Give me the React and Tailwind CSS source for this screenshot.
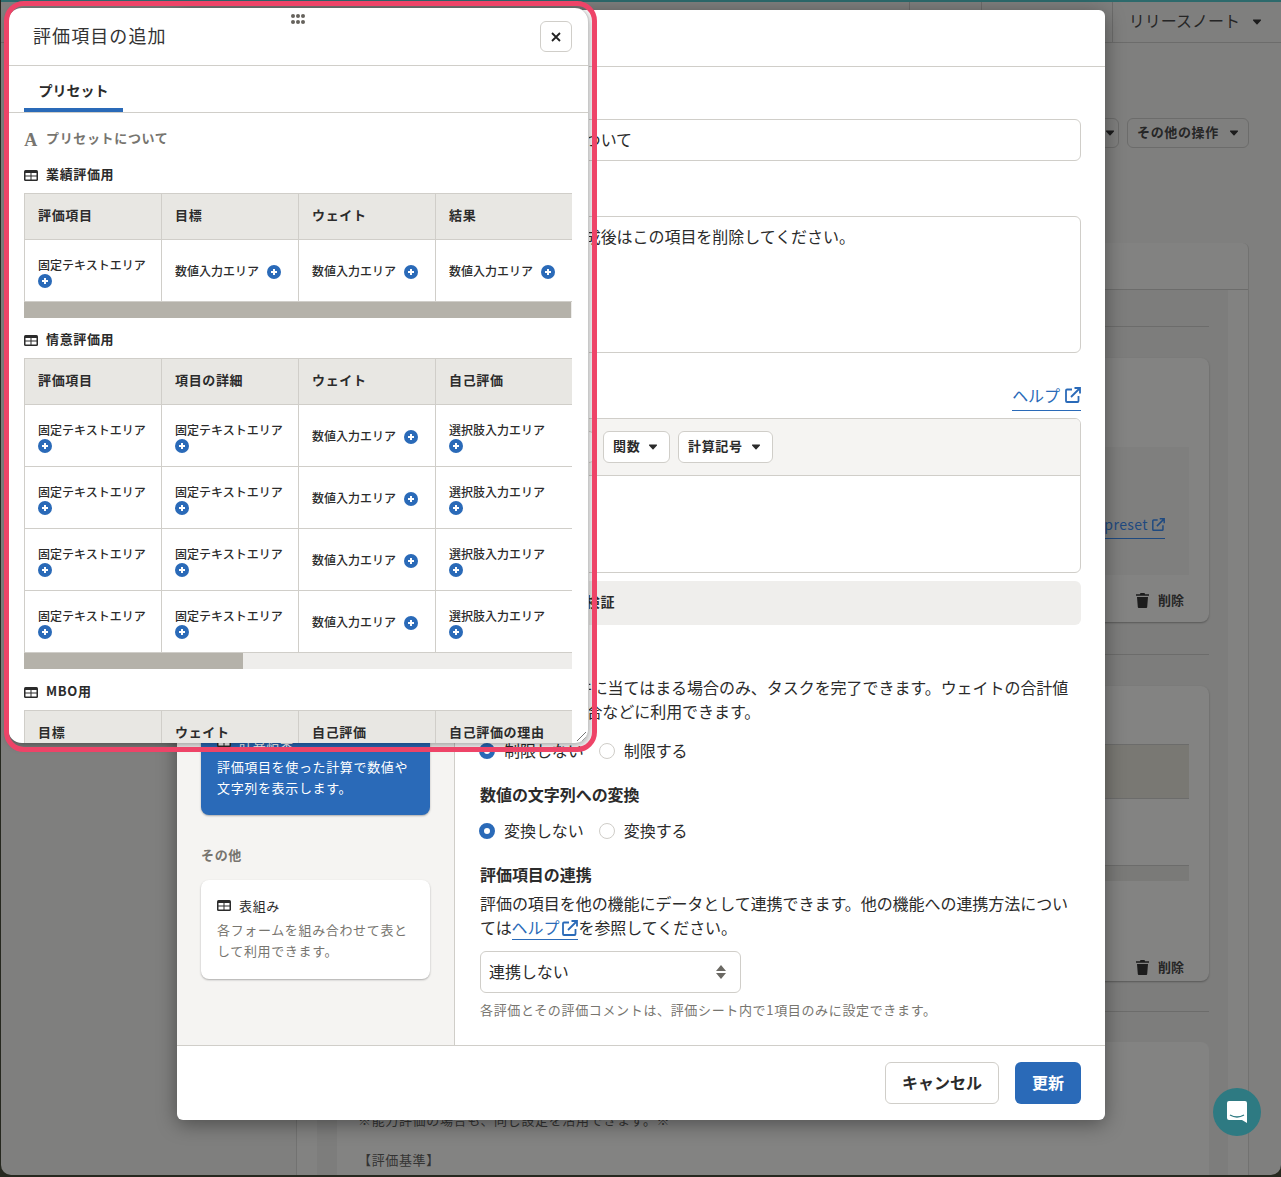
const sections = [
  {
    name: '業績評価用',
    head: ['評価項目', '目標', 'ウェイト', '結果'],
    rows: [['固定テキストエリア', '数値入力エリア', '数値入力エリア', '数値入力エリア']],
    thumb: 'w-[547px] bg-[#b5b2aa]',
  },
  {
    name: '情意評価用',
    head: ['評価項目', '項目の詳細', 'ウェイト', '自己評価'],
    rows: [
      ['固定テキストエリア', '固定テキストエリア', '数値入力エリア', '選択肢入力エリア'],
      ['固定テキストエリア', '固定テキストエリア', '数値入力エリア', '選択肢入力エリア'],
      ['固定テキストエリア', '固定テキストエリア', '数値入力エリア', '選択肢入力エリア'],
      ['固定テキストエリア', '固定テキストエリア', '数値入力エリア', '選択肢入力エリア'],
    ],
    thumb: 'w-[219px] bg-[#b5b2aa]',
  },
  {
    name: 'MBO用',
    head: ['目標', 'ウェイト', '自己評価', '自己評価の理由'],
    rows: [],
  },
];

const TableIcon = () => (
  <svg width="14" height="11" viewBox="0 0 14 11" className="shrink-0">
    <rect x="0" y="0" width="14" height="11" rx="1.5" fill="#2b2b2b" />
    <rect x="1.5" y="3" width="5" height="2.5" fill="#fff" />
    <rect x="7.5" y="3" width="5" height="2.5" fill="#fff" />
    <rect x="1.5" y="6.5" width="5" height="3" fill="#fff" />
    <rect x="7.5" y="6.5" width="5" height="3" fill="#fff" />
  </svg>
);

const PlusIcon = ({ className = '' }) => (
  <svg width="14" height="14" viewBox="0 0 14 14" className={`inline-block align-[-3px] ${className}`}>
    <circle cx="7" cy="7" r="7" fill="#2a6ab8" />
    <path d="M7 4v6M4 7h6" stroke="#fff" strokeWidth="2" />
  </svg>
);

const Caret = ({ className = 'fill-[#2b2b2b]' }) => (
  <svg width="10" height="6" viewBox="0 0 9 6" className={className}>
    <path d="M1 .5h7a.6.6 0 0 1 .45 1L5 5.300a.7.7 0 0 1-1 0L.55 1.500A.6.6 0 0 1 1 .5z" />
  </svg>
);

const ExternalIcon = ({ className = 'stroke-[#2a6ab8]', size = 16 }) => (
  <svg width={size} height={size} viewBox="0 0 16 16" fill="none" strokeWidth="1.8" className={`inline-block ${className}`}>
    <path d="M7 2.500H2a1 1 0 0 0-1 1V14a1 1 0 0 0 1 1h10.500a1 1 0 0 0 1-1V9" />
    <path d="M6 10l8-8M9.500 1h5.500v5.500" />
  </svg>
);

const TrashIcon = () => (
  <svg width="13" height="15" viewBox="0 0 13 15" className="fill-[#1c1c1c]">
    <path d="M4.500 0h4l.6 1.200H13v1.600H0V1.200h3.900zM1 4h11l-.8 10a1 1 0 0 1-1 1H2.800a1 1 0 0 1-1-1z" />
  </svg>
);

const Radio = ({ checked, label }) => (
  <label className="flex items-center gap-[9px]">
    {checked ? (
      <span className="w-4 h-4 rounded-full border-[5px] border-[#2a6ab8] bg-white" />
    ) : (
      <span className="w-4 h-4 rounded-full border border-[#cfcdc8] bg-white" />
    )}
    <span className="-translate-y-px">{label}</span>
  </label>
);

const ToolButton = ({ label, className }) => (
  <button className={`h-8 pl-[9px] pr-[11px] flex items-center justify-between bg-white border border-[#d0cec9] rounded-md text-[13px] font-bold tracking-[.05em] text-[#2b2b2b] ${className}`}>
    <span className="-translate-y-px">{label}</span>
    <Caret />
  </button>
);

const PresetTable = ({ section }) => (
  <>
    <div className="flex items-center gap-2 h-5 text-[13px] font-bold tracking-[.05em] text-[#2b2b2b]">
      <TableIcon />
      <span className="-translate-y-px">{section.name}</span>
    </div>
    <div className="mt-2 w-[548px] overflow-hidden border-t border-l border-[#d0cec9]">
      <div className="grid grid-cols-[repeat(4,137px)] w-[548px]">
        {section.head.map((h) => (
          <div key={h} className="h-[46px] flex items-center px-[13px] pb-1 bg-[#e8e7e3] border-r border-b border-[#d0cec9] text-[13px] font-bold tracking-[.05em] text-[#2b2b2b]">
            {h}
          </div>
        ))}
        {section.rows.map((row, i) =>
          row.map((c, j) => (
            <div key={`${i}-${j}`} className={`h-[62px] flex items-center pl-[13px] pr-[12px] border-r border-b border-[#d0cec9] text-[12px] leading-4 font-medium text-[#2b2b2b] ${c.length > 7 ? 'pt-1' : ''}`}>
              <div>
                <span className="mr-2 whitespace-nowrap">{c}</span>
                <PlusIcon className={c.length > 7 ? '-translate-y-px' : ''} />
              </div>
            </div>
          ))
        )}
      </div>
    </div>
    {section.thumb && (
      <div className="h-4 w-[548px] bg-[#eeedeb]">
        <div className={`h-4 ${section.thumb}`} />
      </div>
    )}
  </>
);

const BackgroundPage = () => (
  <div className="h-[1175px] ml-px border-t-2 border-[#2d6a6c] rounded-b-[10px] bg-[#7f7f7e] overflow-hidden text-[#262626]">
    <div className="h-[41px] border-b border-[#6c6c6b] flex items-center justify-end pr-[19px] text-[16px]">
      <div className="mr-[130px] -mt-[34px] w-[73px] h-8 border border-[#6c6c6b] rounded-md" />
      <span className="self-stretch flex items-center gap-3 border-l border-[#6c6c6b] pl-[18px]">
        <span className="-translate-y-[2px] -ml-[2px]">リリースノート</span>
        <Caret className="fill-[#1c1c1c]" />
      </span>
    </div>
    <div className="mt-[75px] flex justify-end gap-2 pr-[32px]">
      <div className="h-[30px] w-[60px] pr-[3px] flex items-center justify-end border border-[#6c6c6b] rounded-md">
        <Caret className="fill-[#1c1c1c]" />
      </div>
      <div className="h-[30px] w-[122px] px-[9px] flex items-center justify-between border border-[#6c6c6b] rounded-md text-[13px] font-bold tracking-[.05em]">
        <span className="-translate-y-px">その他の操作</span>
        <Caret className="fill-[#1c1c1c]" />
      </div>
    </div>
    <div className="mt-[95px] ml-[295px] w-[953px] h-[1000px] rounded-t-md border-r border-l border-[#727271] bg-[#828281]">
      <div className="h-[47px] border-b border-[#6c6c6b]" />
      <div className="mx-5 h-[900px] bg-[#7d7d7c] pl-5 pr-[19px] pt-9">
        <div className="h-px bg-[#6c6c6b]" />
        <div className="mt-[31px] h-[264px] rounded-lg bg-[#838382] shadow-[0_1px_2px_rgba(0,0,0,.3)] px-5 pt-[89px]">
          <div className="h-[128px] bg-[#7f7f7e] flex items-center justify-end pr-6 pt-[30px] text-[14px] text-[#1f4a80]">
            <span className="border-b border-[#1f4a80] flex items-center gap-1 pb-[3px] tracking-[.03em]">
              .preset
              <ExternalIcon className="stroke-[#1f4a80]" size={13} />
            </span>
          </div>
          <div className="mt-4 flex items-center justify-end gap-[9px] pr-[5px] text-[13px] font-bold">
            <TrashIcon />
            <span className="-translate-y-px">削除</span>
          </div>
        </div>
        <div className="mt-8 h-px bg-[#6c6c6b]" />
        <div className="mt-[31px] h-[295px] rounded-lg bg-[#838382] shadow-[0_1px_2px_rgba(0,0,0,.3)] px-5 pt-[58px]">
          <div className="h-[55px] bg-[#797873] border-y border-[#6c6c6b]" />
          <div className="mt-[66px] h-4 bg-[#7a7a78] border-t border-[#6c6c6b]" />
          <div className="mt-[77px] flex items-center justify-end gap-[9px] pr-[5px] text-[13px] font-bold">
            <TrashIcon />
            <span className="-translate-y-px">削除</span>
          </div>
        </div>
        <div className="mt-[30px] h-px bg-[#6c6c6b]" />
        <div className="mt-[30px] h-[200px] rounded-t-lg bg-[#838382] px-[21px] pt-[66px] text-[13px] leading-[24px] tracking-[.05em] text-[#333]">
          <p>※能力評価の場合も、同じ設定を活用できます。※</p>
          <p className="mt-4">【評価基準】</p>
        </div>
      </div>
    </div>
  </div>
);

const Modal = () => (
  <div className="absolute left-[177px] top-[10px] w-[928px] h-[1110px] bg-white rounded-md shadow-[0_4px_20px_rgba(0,0,0,.4)] flex flex-col text-[16px] text-[#2b2b2b]">
    <div className="h-[57px] shrink-0 border-b border-[#d0cec9]" />
    <div className="flex-1 flex min-h-0">
      <div className="w-[278px] shrink-0 bg-[#f5f4f2] border-r border-[#d0cec9] flex flex-col justify-end px-6 pb-[66px]">
        <div className="h-[99px] rounded-lg bg-[#2a6ab8] shadow-[0_1px_2px_rgba(0,0,0,.3)] px-4 pt-[15px] text-[13px] leading-[21px] tracking-[.05em] text-white">
          <div className="h-5 flex items-center gap-2">
            <TableIcon />
            計算結果
          </div>
          <p className="mt-[5px]">評価項目を使った計算で数値や文字列を表示します。</p>
        </div>
        <div className="mt-[30px] h-5 text-[13px] font-bold tracking-[.05em] text-[#77756f]">その他</div>
        <div className="mt-[15px] h-[99px] rounded-lg bg-white shadow-[0_1px_2px_rgba(0,0,0,.3)] px-4 pt-[15px] text-[13px] leading-[21px] tracking-[.05em]">
          <div className="h-5 flex items-center gap-2">
            <TableIcon />
            表組み
          </div>
          <p className="mt-[4px] text-[#77756f]">各フォームを組み合わせて表として利用できます。</p>
        </div>
      </div>
      <div className="flex-1 pl-[25px] pr-[24px] pt-[52px] leading-6 tracking-[-.05px]">
        <div className="h-[42px] pl-2 pb-[2px] flex items-center border border-[#d0cec9] rounded-md">プリセットについて</div>
        <div className="mt-[55px] h-[137px] px-2 py-[7px] border border-[#d0cec9] rounded-md">プリセット作成後はこの項目を削除してください。</div>
        <div className="mt-7 h-[30px] flex justify-end">
          <a className="h-[30px] pb-[2px] flex items-center gap-[5px] border-b border-[#2a6ab8] text-[#2a6ab8]">
            ヘルプ
            <ExternalIcon />
          </a>
        </div>
        <div className="mt-[7px] h-[155px] border border-[#d0cec9] rounded-md overflow-hidden">
          <div className="h-[57px] bg-[#f5f4f2] border-b border-[#d0cec9] flex items-center gap-2 pl-3">
            <ToolButton label="評価項目" className="w-[102px]" />
            <ToolButton label="関数" className="w-[67px]" />
            <ToolButton label="計算記号" className="w-[95px]" />
          </div>
        </div>
        <div className="mt-2 h-11 pl-[47px] pb-1 flex items-center rounded-md bg-[#efeeec] text-[14px] font-bold tracking-[.05em]">計算式を検証</div>
        <p className="mt-[51px] -translate-y-px">計算結果が条件に当てはまる場合のみ、タスクを完了できます。ウェイトの合計値を100にする場合などに利用できます。</p>
        <div className="mt-[15px] -ml-px flex gap-[15px]">
          <Radio checked label="制限しない" />
          <Radio label="制限する" />
        </div>
        <h3 className="mt-5 font-bold -translate-y-px">数値の文字列への変換</h3>
        <div className="mt-3 -ml-px flex gap-[15px]">
          <Radio checked label="変換しない" />
          <Radio label="変換する" />
        </div>
        <h3 className="mt-5 font-bold -translate-y-px">評価項目の連携</h3>
        <p className="mt-[5px] -translate-y-px">
          評価の項目を他の機能にデータとして連携できます。他の機能への連携方法については
          <a className="text-[#2a6ab8] border-b border-[#2a6ab8]">
            ヘルプ<ExternalIcon className="stroke-[#2a6ab8] ml-[3px] align-[-2px]" />
          </a>
          を参照してください。
        </p>
        <div className="mt-[11px] w-[261px] h-[42px] pl-2 pr-[13px] pb-[2px] flex items-center justify-between border border-[#d0cec9] rounded-md">
          連携しない
          <svg width="12" height="16" viewBox="0 0 12 16" className="fill-[#6b6964] translate-y-px">
            <path d="M6 1l5 6H1zM6 15l5-6H1z" />
          </svg>
        </div>
        <p className="mt-2 -translate-y-px text-[13px] leading-5 tracking-[.05em] text-[#77756f]">各評価とその評価コメントは、評価シート内で1項目のみに設定できます。</p>
      </div>
    </div>
    <div className="h-[75px] shrink-0 border-t border-[#d0cec9] flex items-center justify-end gap-4 pr-6">
      <button className="w-[114px] h-[42px] pb-[2px] border border-[#d0cec9] rounded-md bg-white font-bold">キャンセル</button>
      <button className="w-[66px] h-[42px] pb-[2px] rounded-md bg-[#2a6ab8] text-white font-bold">更新</button>
    </div>
  </div>
);

const PresetPanel = () => (
  <div className="absolute left-[8px] top-[8px] w-[581px] h-[735px] bg-white rounded-[14px] border-r border-[#c8c8c8] overflow-hidden flex flex-col shadow-[0_2px_8px_rgba(0,0,0,.4)] text-[#2b2b2b]">
    <div className="relative h-[58px] shrink-0 border-b border-[#d0cec9] pl-[25px] pr-4 flex items-center justify-between">
      <span className="text-[18px] tracking-[.06em] text-[#333] -translate-y-px">評価項目の追加</span>
      <svg width="14" height="10" viewBox="0 0 14 10" className="absolute left-[283px] top-[6px] fill-[#66635d]">
        <circle cx="2" cy="2" r="2" /><circle cx="7" cy="2" r="2" /><circle cx="12" cy="2" r="2" />
        <circle cx="2" cy="8" r="2" /><circle cx="7" cy="8" r="2" /><circle cx="12" cy="8" r="2" />
      </svg>
      <button className="w-8 h-[31px] flex items-center justify-center border border-[#d0cec9] rounded-md">
        <svg width="10" height="10" viewBox="0 0 10 10" stroke="#222" strokeWidth="1.8"><path d="M1 1l8 8M9 1l-8 8" /></svg>
      </button>
    </div>
    <div className="h-[47px] shrink-0 border-b border-[#d0cec9] pl-4">
      <div className="w-[99px] h-[46px] border-b-4 border-[#2a6ab8] flex items-center justify-center text-[14px] font-bold pt-[6px]">プリセット</div>
    </div>
    <div className="flex-1 min-h-0 overflow-hidden pl-4 pt-4">
      <div className="h-5 flex items-center gap-2 text-[13px] font-bold tracking-[.05em] text-[#77756f]">
        <span className="w-[14px] text-center text-[18px] pt-[2px] font-['Liberation_Serif',serif]">A</span>
        <span className="-translate-y-px">プリセットについて</span>
      </div>
      {sections.map((s, i) => (
        <div key={s.name} className={i === 0 ? 'mt-4' : i === 1 ? 'mt-3' : 'mt-[13px]'}>
          <PresetTable section={s} />
        </div>
      ))}
    </div>
    <svg width="9" height="9" viewBox="0 0 9 9" stroke="#777" className="absolute right-[2px] bottom-[2px]">
      <path d="M0 9l9-9M5 9l4-4" />
    </svg>
  </div>
);

export default function App() {
  return (
    <div className="relative w-[1281px] h-[1177px] overflow-hidden bg-[#26281f] font-['Noto_Sans_CJK_JP','Noto_Sans',sans-serif]">
      <BackgroundPage />
      <Modal />
      <PresetPanel />
      {/* annotation frame around the floating panel */}
      <div className="absolute left-[4px] top-px w-[593px] h-[751px] border-[5px] border-[#ee4468] rounded-[20px] pointer-events-none" />
      <button className="absolute left-[1213px] top-[1088px] w-12 h-12 rounded-full bg-[#2e7a82] flex items-center justify-center">
        <svg width="22" height="24" viewBox="0 0 22 24">
          <path d="M3 1h16a2 2 0 0 1 2 2v20l-5-3H3a2 2 0 0 1-2-2V3a2 2 0 0 1 2-2z" fill="#fff" />
          <path d="M4 15q7 4 14 0" fill="none" stroke="#2e7a82" strokeWidth="1.4" />
        </svg>
      </button>
    </div>
  );
}
